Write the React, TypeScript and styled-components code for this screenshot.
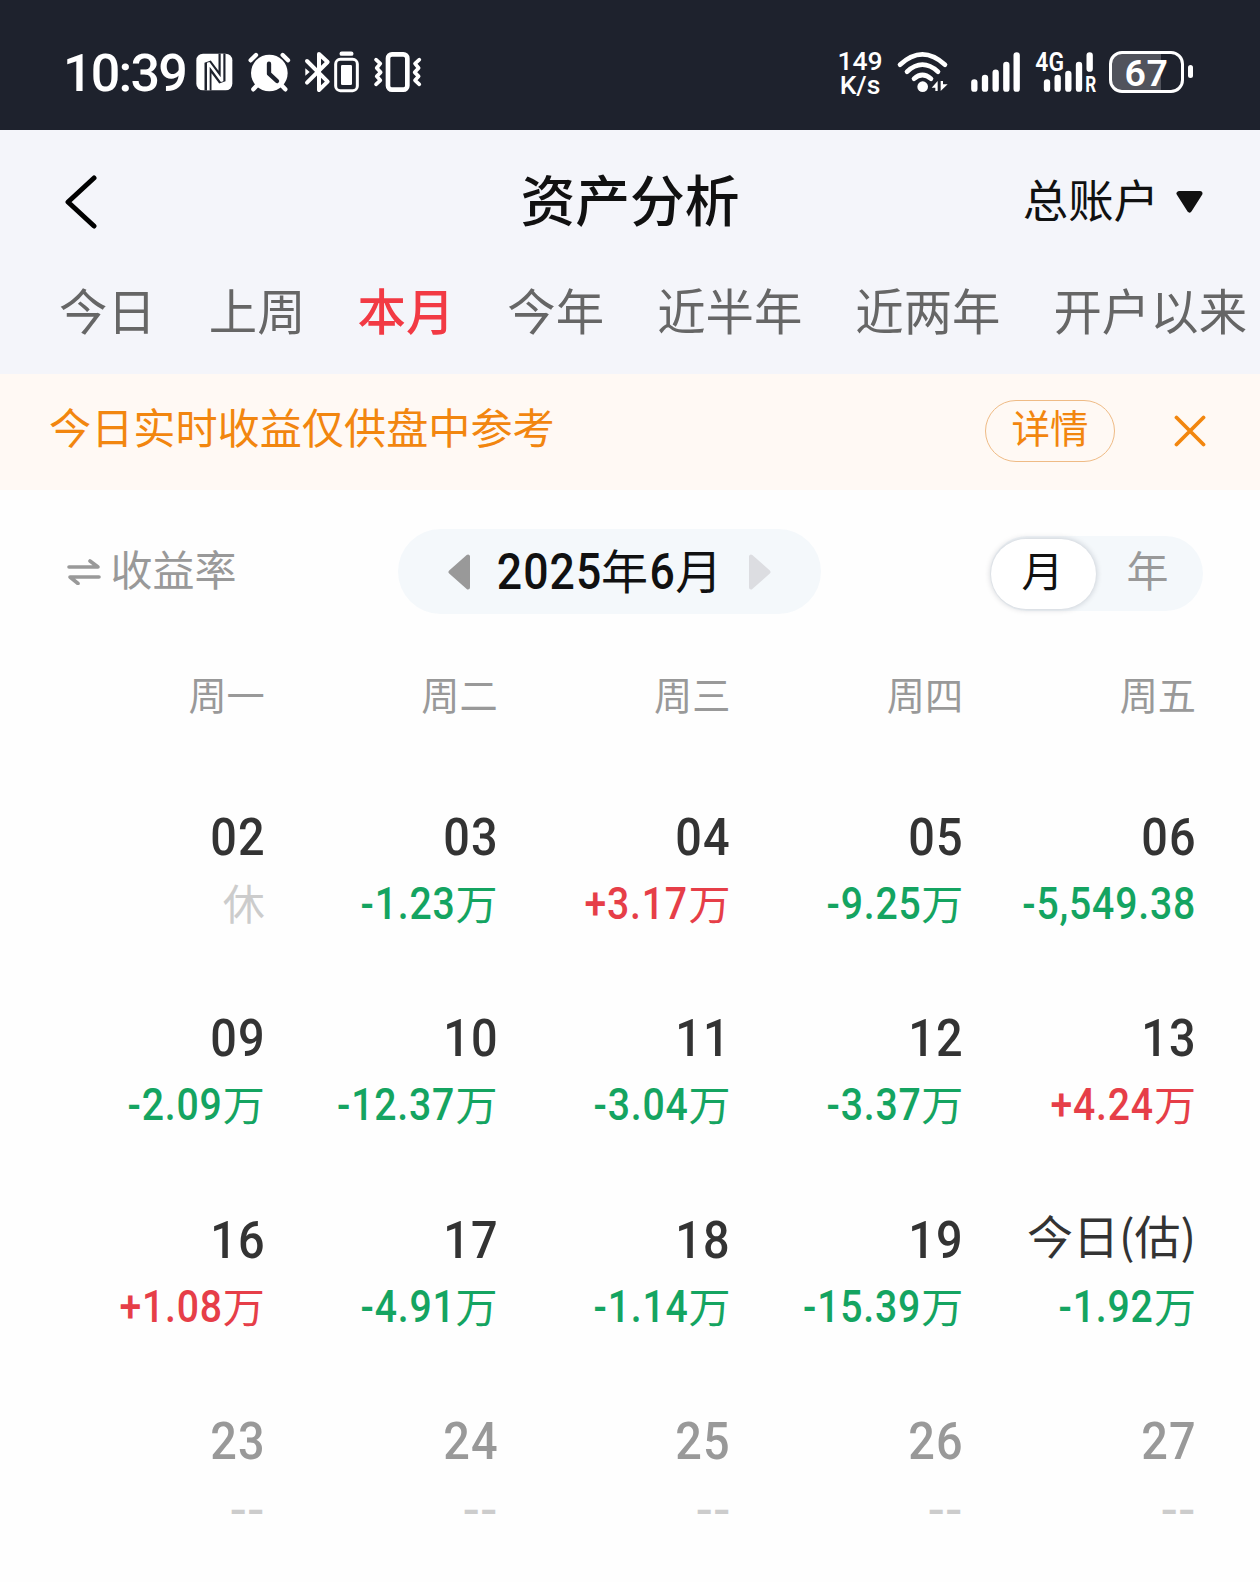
import React from 'react';
import styled, { createGlobalStyle } from 'styled-components';

const CJK = `'Noto Sans CJK SC', sans-serif`;
const NUM = `Roboto, 'Noto Sans CJK SC', sans-serif`;

const GlobalStyle = createGlobalStyle`
  * { box-sizing: border-box; }
  body { margin: 0; background: #fff; font-family: ${CJK}; }
  button { border: 0; padding: 0; margin: 0; background: none; font: inherit; color: inherit; }
`;

const Screen = styled.main`
  width: 1260px;
  height: 1582px;
  overflow: hidden;
  background: #fefefe;
`;

/* ---------- status bar ---------- */
const StatusBar = styled.div`
  height: 130px;
  padding: 50px 67px 0 63px;
  display: flex;
  justify-content: space-between;
  align-items: flex-start;
  background: #1e222d;
  color: #fff;
  font-family: ${NUM};
`;
const StatusGroup = styled.div`
  display: flex;
  align-items: flex-start;
  height: 44px;
`;
const Clock = styled.span`
  width: 133px;
  font-size: 52px;
  font-weight: 500;
  line-height: 47px;
  letter-spacing: -1.8px;
  white-space: nowrap;
`;
const Speed = styled.div`
  width: 46px;
  height: 46px;
  display: flex;
  flex-direction: column;
  justify-content: space-between;
  align-items: center;
  font-size: 26.5px;
  font-weight: 500;
  line-height: 22px;
`;
const Glyph = styled.svg<{ $gap?: number }>`
  display: block;
  flex: none;
  overflow: visible;
  margin-left: ${(p) => p.$gap ?? 0}px;
`;
const BatteryShell = styled.div`
  position: relative;
  width: 75px;
  height: 42px;
  margin: 1px 0 0 13px;
  border: 3px solid #fff;
  border-radius: 13px;
  background: linear-gradient(90deg, #51535c 0 49px, #1e222d 49px);
  font-size: 37.5px;
  font-weight: 600;
  line-height: 38px;
  text-align: center;
  letter-spacing: 0.5px;
`;
const BatteryTip = styled.div`
  width: 5px;
  height: 13px;
  margin: 15px 0 0 4px;
  border-radius: 3px;
  background: #fff;
`;

/* ---------- header ---------- */
const Header = styled.header`
  height: 244px;
  background: #f4f5fa;
`;
const TitleBar = styled.div`
  height: 132px;
  padding: 8px 57px 0 64px;
  display: grid;
  grid-template-columns: 1fr auto 1fr;
  align-items: center;
  color: #111;
`;
const BackButton = styled.button`
  justify-self: start;
  display: flex;
  padding-top: 4px;
`;
const Title = styled.h1`
  margin: 0 0 0 -7px;
  font-size: 54.8px;
  font-weight: 500;
  line-height: 64px;
  padding-bottom: 6px;
`;
const AccountPicker = styled.button`
  justify-self: end;
  display: flex;
  align-items: center;
  gap: 17px;
  padding-top: 3px;
  font-size: 45.4px;
  line-height: 56px;
`;
const AccountName = styled.span`
  padding-bottom: 7px;
`;
const Tabs = styled.nav`
  display: flex;
  gap: 53px;
  padding: 1px 0 0 59px;
  overflow: hidden;
`;
const Tab = styled.button<{ $active?: boolean }>`
  flex: none;
  height: 92px;
  font-size: 48.4px;
  line-height: 92px;
  font-weight: ${(p) => (p.$active ? 500 : 400)};
  text-indent: ${(p) => (p.$active ? '-1px' : '0')};
  color: ${(p) => (p.$active ? '#f23a44' : '#666')};
`;

/* ---------- notice ---------- */
const Notice = styled.section`
  height: 116px;
  padding: 0 54px 0 49px;
  display: flex;
  align-items: center;
  background: #fff9f4;
  color: #f2860f;
`;
const NoticeText = styled.p`
  margin: 0;
  flex: 1;
  font-size: 42.15px;
  line-height: 60px;
  padding-bottom: 12px;
`;
const DetailButton = styled.button`
  width: 130px;
  height: 62px;
  margin: 0 59px 2px 0;
  border: 1.5px solid #efbb85;
  border-radius: 31px;
  font-size: 38.5px;
  line-height: 50px;
  padding-bottom: 11px;
`;
const CloseButton = styled.button`
  display: flex;
  padding-bottom: 2px;
`;

/* ---------- period controls ---------- */
const Controls = styled.section`
  height: 163px;
  padding: 0 57px 0 67px;
  display: grid;
  grid-template-columns: 331px 423px 1fr;
  align-items: center;
`;
const ModeSwitch = styled.button`
  display: flex;
  align-items: center;
  gap: 9.5px;
  font-size: 42px;
  line-height: 60px;
  color: #999;
`;
const ModeLabel = styled.span`
  padding-bottom: 8px;
`;
const MonthPicker = styled.div`
  height: 85px;
  display: flex;
  align-items: center;
  justify-content: space-between;
  padding: 0 50px;
  border-radius: 43px;
  background: #f4f8fb;
`;
const MonthLabel = styled.span`
  display: flex;
  align-items: baseline;
  height: 62px;
  padding-right: 3px;
  color: #111;
`;
const Unit = styled.span`
  font-size: 47px;
  line-height: 1;
`;
/* Condensed numerals; squeezed towards the right edge of their box. */
const Digits = styled.span<{ $size: number; $spacing: number; $origin?: string }>`
  display: inline-block;
  flex: none;
  font-family: ${NUM};
  font-size: ${(p) => p.$size}px;
  font-weight: 500;
  line-height: 62px;
  letter-spacing: ${(p) => p.$spacing}px;
  transform: scaleX(0.9);
  transform-origin: ${(p) => p.$origin ?? 'right'} center;
`;
const YearDigits = styled(Digits)`
  margin: 0 -1px 0 -9px;
`;
const MonthDigits = styled(Digits)`
  margin-right: -2px;
`;
const RangeToggle = styled.div`
  justify-self: end;
  width: 213px;
  height: 75px;
  margin-top: 4px;
  padding: 3px 1px 2px;
  display: flex;
  border-radius: 38px;
  background: #f4f8fb;
`;
const RangeOption = styled.button<{ $active?: boolean }>`
  width: 105px;
  height: 70px;
  border-radius: 35px;
  font-size: 42px;
  line-height: 58px;
  padding: 0 2px 11px 0;
  color: ${(p) => (p.$active ? '#111' : '#999')};
  background: ${(p) => (p.$active ? '#fff' : 'transparent')};
  box-shadow: ${(p) => (p.$active ? '0 0 6px rgba(0, 20, 40, 0.22)' : 'none')};
`;

/* ---------- calendar ---------- */
const Calendar = styled.section`
  padding: 0 65px 0 31px;
`;
const Week = styled.div`
  display: grid;
  grid-template-columns: repeat(5, 1fr);
  height: 201.4px;
`;
const WeekHeader = styled(Week)`
  height: 155px;
  padding-top: 11px;
  font-size: 38.2px;
  line-height: 60px;
  text-align: right;
  color: #999;
`;
const WeekdayName = styled.span`
  margin-right: -1px;
`;
const Day = styled.div`
  display: flex;
  flex-direction: column;
  align-items: flex-end;
  white-space: nowrap;
`;
const DayNumber = styled.span<{ $dim?: boolean }>`
  display: flex;
  height: 66px;
  margin-right: -2px;
  color: ${(p) => (p.$dim ? '#999' : '#333')};
`;
const DayDigits = styled(Digits)`
  line-height: 60px;
`;
const TodayLabel = styled.span`
  height: 66px;
  font-size: 46px;
  line-height: 46px;
  margin-right: -1px;
  color: #333;
`;
type Tone = 'up' | 'down' | 'none';
const TONES: Record<Tone, string> = { up: '#e63e48', down: '#14a461', none: '#ccc' };
const Amount = styled.span<{ $tone: Tone }>`
  display: flex;
  align-items: flex-start;
  height: 60px;
  margin-right: -1px;
  color: ${(p) => TONES[p.$tone]};
`;
const AmountUnit = styled.span`
  font-size: 42px;
  line-height: 55px;
`;
const Dashes = styled.span`
  font-family: ${NUM};
  font-size: 44px;
  font-weight: 500;
  line-height: 64px;
  letter-spacing: 0.4px;
  transform: scaleX(1.14);
  transform-origin: right center;
`;

interface DayData {
  day: string;
  value: string;
  unit?: string;
  tone: Tone;
  dim?: boolean;
}
const d = (day: string, value: string, unit = '万'): DayData => ({
  day, value, unit, tone: value[0] === '+' ? 'up' : 'down',
});
const future = (day: string): DayData => ({ day, value: '--', tone: 'none', dim: true });

const WEEKDAYS = ['周一', '周二', '周三', '周四', '周五'];
const WEEKS: DayData[][] = [
  [{ day: '02', value: '', unit: '休', tone: 'none' }, d('03', '-1.23'), d('04', '+3.17'), d('05', '-9.25'), d('06', '-5,549.38', '')],
  [d('09', '-2.09'), d('10', '-12.37'), d('11', '-3.04'), d('12', '-3.37'), d('13', '+4.24')],
  [d('16', '+1.08'), d('17', '-4.91'), d('18', '-1.14'), d('19', '-15.39'), d('今日(估)', '-1.92')],
  ['23', '24', '25', '26', '27'].map(future),
];
const TABS = ['今日', '上周', '本月', '今年', '近半年', '近两年', '开户以来'];

const StatusIcons = () => (
  <>
    <Glyph width={37} height={43.33} viewBox="467 60 111 130">
      <rect x="468" y="71" width="108" height="110" rx="20" fill="#fff" />
      <path d="M503 181V98L545 154V71" fill="none" stroke="#1e222d" strokeWidth="21" strokeLinejoin="bevel" />
      <path d="M504 181V98L545 154V71" fill="none" stroke="#fff" strokeWidth="8" strokeLinejoin="bevel" />
    </Glyph>
    <Glyph $gap={15} width={42} height={43.33} viewBox="622 60 126 130">
      <circle cx="686" cy="129" r="55" fill="#fff" />
      <path d="M630 91L646 75M742 91L726 75M650 165L638 178M722 165L734 178" stroke="#fff" strokeWidth="13" strokeLinecap="round" />
      <path d="M685 101V131L709 153" fill="none" stroke="#1e222d" strokeWidth="13" strokeLinecap="round" strokeLinejoin="round" />
    </Glyph>
    <Glyph $gap={15} width={25} height={43.33} viewBox="794 60 75 130">
      <path d="M800 93L862 155L836 180V72L862 96L800 158" fill="none" stroke="#fff" strokeWidth="12" strokeLinecap="round" strokeLinejoin="round" />
      <path d="M795 115L808 126L795 137Z" fill="#fff" />
    </Glyph>
    <Glyph $gap={4} width={25} height={43.33} viewBox="881 60 75 130">
      <path d="M904 71H933" stroke="#fff" strokeWidth="13" strokeLinecap="round" />
      <rect x="886" y="88" width="65" height="94" rx="14" fill="none" stroke="#fff" strokeWidth="9" />
      <rect x="902" y="105" width="33" height="60" rx="4" fill="#fff" />
    </Glyph>
    <Glyph $gap={15} width={48} height={43.33} viewBox="1001 60 144 130">
      <rect x="1043" y="73" width="58" height="106" rx="12" fill="none" stroke="#fff" strokeWidth="14" />
      <path d="M1007 89L1020 101L1009 114L1021 127L1009 139L1020 151L1007 163M1137 89L1124 101L1135 114L1123 127L1135 139L1124 151L1137 163" fill="none" stroke="#fff" strokeWidth="11" strokeLinecap="round" strokeLinejoin="round" />
    </Glyph>
  </>
);

const NetworkIcons = () => (
  <>
    <Glyph $gap={14} width={51} height={43.33} viewBox="231 60 153 130">
      <path d="M240 104Q307 42 375 104M261 125Q307 83 354 125M282 146Q307 124 333 146" fill="none" stroke="#fff" strokeWidth="14" strokeLinecap="round" />
      <circle cx="308" cy="170" r="16" fill="#fff" />
      <path d="M353 153V183H346V173H335ZM362 183V153H369V163H383Z" fill="#fff" />
    </Glyph>
    <Glyph $gap={22} width={50} height={43.33} viewBox="450 60 150 130">
      <path d="M463 157V176M495 144V176M527 128V176M559 105V176M590 76V176" stroke="#fff" strokeWidth="19" strokeLinecap="round" />
    </Glyph>
    <Glyph $gap={15} width={61} height={43.33} viewBox="646 60 183 130">
      <path d="M682 157V176M714 144V176M746 132V176M778 105V176M810 76V116" stroke="#fff" strokeWidth="19" strokeLinecap="round" />
      <text x="647" y="124" fontFamily="Roboto, sans-serif" fontSize="78" fontWeight="600" fill="#fff" textLength="86" lengthAdjust="spacingAndGlyphs">4G</text>
      <text x="797" y="185" fontFamily="Roboto, sans-serif" fontSize="66" fontWeight="700" fill="#fff" textLength="33" lengthAdjust="spacingAndGlyphs">R</text>
    </Glyph>
  </>
);

export default function App() {
  return (
    <Screen>
      <GlobalStyle />
      <StatusBar>
        <StatusGroup>
          <Clock>10:39</Clock>
          <StatusIcons />
        </StatusGroup>
        <StatusGroup>
          <Speed><span>149</span><span>K/s</span></Speed>
          <NetworkIcons />
          <BatteryShell>67</BatteryShell>
          <BatteryTip />
        </StatusGroup>
      </StatusBar>

      <Header>
        <TitleBar>
          <BackButton aria-label="返回">
            <svg width="34" height="54" viewBox="0 0 34 54">
              <path d="M30 3L4 27L30 51" fill="none" stroke="#000" strokeWidth="5" strokeLinecap="round" strokeLinejoin="round" />
            </svg>
          </BackButton>
          <Title>资产分析</Title>
          <AccountPicker>
            <AccountName>总账户</AccountName>
            <svg width="27" height="22" viewBox="0 0 27 22">
              <path d="M3 2.5H24L13.5 19Z" fill="#111" stroke="#111" strokeWidth="5" strokeLinejoin="round" />
            </svg>
          </AccountPicker>
        </TitleBar>
        <Tabs>
          {TABS.map((t) => <Tab key={t} $active={t === '本月'}>{t}</Tab>)}
        </Tabs>
      </Header>

      <Notice>
        <NoticeText>今日实时收益仅供盘中参考</NoticeText>
        <DetailButton>详情</DetailButton>
        <CloseButton aria-label="关闭">
          <svg width="32" height="32" viewBox="0 0 32 32">
            <path d="M2.5 2.5L29.5 29.5M29.5 2.5L2.5 29.5" stroke="#f2860f" strokeWidth="3.8" strokeLinecap="round" />
          </svg>
        </CloseButton>
      </Notice>

      <Controls>
        <ModeSwitch>
          <svg width="34" height="26" viewBox="0 0 34 26">
            <path d="M2 8H31L23 2M32 18H3L11 24.5" fill="none" stroke="#999" strokeWidth="3.6" strokeLinecap="round" strokeLinejoin="round" />
          </svg>
          <ModeLabel>收益率</ModeLabel>
        </ModeSwitch>
        <MonthPicker>
          <svg width="22" height="36" viewBox="0 0 22 36">
            <path d="M20 2.5V33.5L2.5 18Z" fill="#999" stroke="#999" strokeWidth="4" strokeLinejoin="round" />
          </svg>
          <MonthLabel>
            <YearDigits $size={49.5} $spacing={1.2}>2025</YearDigits>
            <Unit>年</Unit>
            <MonthDigits $size={49.5} $spacing={1} $origin="center">6</MonthDigits>
            <Unit>月</Unit>
          </MonthLabel>
          <svg width="22" height="36" viewBox="0 0 22 36">
            <path d="M2 2.5V33.5L19.5 18Z" fill="#dcdde1" stroke="#dcdde1" strokeWidth="4" strokeLinejoin="round" />
          </svg>
        </MonthPicker>
        <RangeToggle>
          <RangeOption $active>月</RangeOption>
          <RangeOption>年</RangeOption>
        </RangeToggle>
      </Controls>

      <Calendar>
        <WeekHeader>
          {WEEKDAYS.map((w) => <WeekdayName key={w}>{w}</WeekdayName>)}
        </WeekHeader>
        {WEEKS.map((week) => (
          <Week key={week[0].day}>
            {week.map((c) => (
              <Day key={c.day}>
                {c.day.startsWith('今') ? (
                  <TodayLabel>{c.day}</TodayLabel>
                ) : (
                  <DayNumber $dim={c.dim}><DayDigits $size={52} $spacing={1.4}>{c.day}</DayDigits></DayNumber>
                )}
                <Amount $tone={c.tone}>
                  {c.tone === 'none'
                    ? c.value && <Dashes>{c.value}</Dashes>
                    : <Digits $size={43.5} $spacing={0.9}>{c.value}</Digits>}
                  {c.unit && <AmountUnit>{c.unit}</AmountUnit>}
                </Amount>
              </Day>
            ))}
          </Week>
        ))}
      </Calendar>
    </Screen>
  );
}
